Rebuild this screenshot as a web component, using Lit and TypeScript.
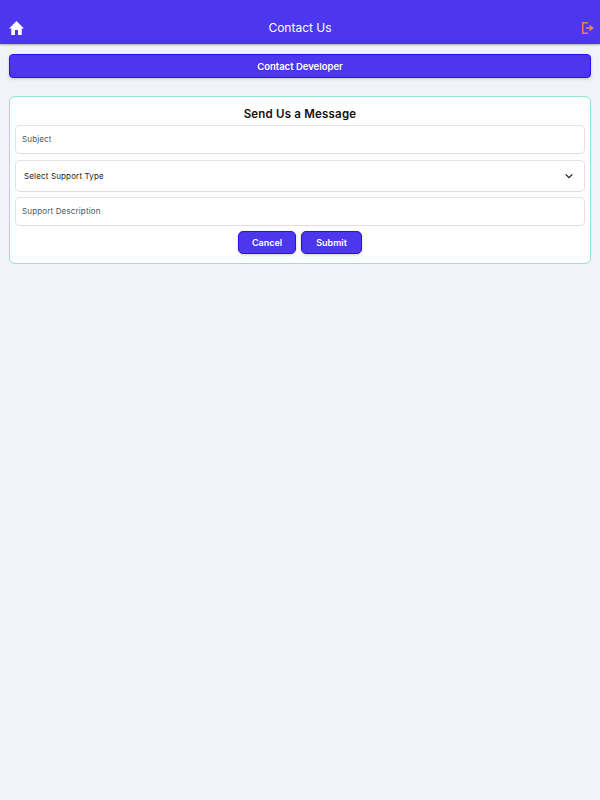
import { LitElement, css, html } from 'lit';
import { customElement } from 'lit/decorators.js';

@customElement('app-root')
export class AppRoot extends LitElement {
  static styles = css`
    :host {
      display: block;
      min-height: 800px;
      background: #f0f4f8;
      font-family: 'Inter', 'Noto Sans', sans-serif;
      color: #111;
    }

    header {
      height: 44px;
      box-sizing: border-box;
      background: #4c37ee;
      box-shadow: 0 1px 2px rgba(0, 0, 0, 0.3);
      display: grid;
      grid-template-columns: 1fr auto 1fr;
      align-items: end;
      padding: 0 6px 8px;
    }

    header h1 {
      margin: 0;
      font-size: 12px;
      font-weight: 400;
      color: #fff;
      line-height: 16px;
    }

    .home { width: 15px; height: 14px; display: block; margin: 0 0 1px 3px; }
    .exit { width: 12px; height: 12px; display: block; margin: 0 0 2px auto; }

    main {
      padding: 10px 9px 0;
      display: flex;
      flex-direction: column;
      gap: 18px;
    }

    button {
      font-family: inherit;
      font-weight: 600;
      color: #fff;
      background: #4c37ee;
      border: 1px solid #2a10f5;
      cursor: pointer;
      box-shadow: 0 1px 3px rgba(0, 0, 0, 0.2);
    }

    .dev {
      height: 24px;
      border-radius: 4px;
      font-size: 9.5px;
      padding: 0;
    }

    .card {
      background: #fff;
      border: 1px solid #8fe3d3;
      border-radius: 6px;
      padding: 5px;
      height: 168px;
      box-sizing: border-box;
      display: flex;
      flex-direction: column;
    }

    .card h2 {
      margin: 4px 0 2px;
      text-align: center;
      font-size: 11.5px;
      line-height: 17px;
      font-weight: 600;
      letter-spacing: 0.2px;
    }

    .field {
      border: 1px solid #e2e4e8;
      border-bottom-color: #dcdee2;
      border-radius: 5px;
      box-sizing: border-box;
      height: 29px;
      padding: 0 6px 1px;
      display: flex;
      align-items: center;
      justify-content: space-between;
      font-size: 8px;
      letter-spacing: 0.15px;
      color: #4b5563;
      background: #fff;
    }

    .field.select {
      height: 32px;
      margin: 6px 0 5px;
      padding: 0 10px 0 8px;
      color: #222;
    }

    .chevron { width: 10px; height: 10px; display: block; }

    .actions {
      display: flex;
      justify-content: center;
      gap: 5px;
      margin-top: 5px;
    }

    .actions button {
      height: 23px;
      border-radius: 5px;
      font-size: 9px;
      padding: 0;
    }

    .cancel { width: 58px; }
    .submit { width: 61px; }
  `;

  render() {
    return html`
      <header>
        <svg class="home" viewBox="2 3 20 17" preserveAspectRatio="none" fill="#fff">
          <path d="M10 20v-6h4v6h5v-8h3L12 3 2 12h3v8z" />
        </svg>
        <h1>Contact Us</h1>
        <svg class="exit" viewBox="0 0 24 24" fill="none" stroke="#f07f5c" stroke-width="3">
          <path d="M12 1.5H1.5v21H12" />
          <path d="M8 12h9" />
          <path d="M15 5.5l9 6.5-9 6.5z" fill="#f07f5c" stroke="none" />
        </svg>
      </header>
      <main>
        <button class="dev">Contact Developer</button>
        <section class="card">
          <h2>Send Us a Message</h2>
          <div class="field">Subject</div>
          <div class="field select">
            <span>Select Support Type</span>
            <svg class="chevron" viewBox="0 0 24 24" fill="none" stroke="#222" stroke-width="3">
              <path d="M4 8l8 8 8-8" />
            </svg>
          </div>
          <div class="field">Support Description</div>
          <div class="actions">
            <button class="cancel">Cancel</button>
            <button class="submit">Submit</button>
          </div>
        </section>
      </main>
    `;
  }
}

declare global {
  interface HTMLElementTagNameMap {
    'app-root': AppRoot;
  }
}
